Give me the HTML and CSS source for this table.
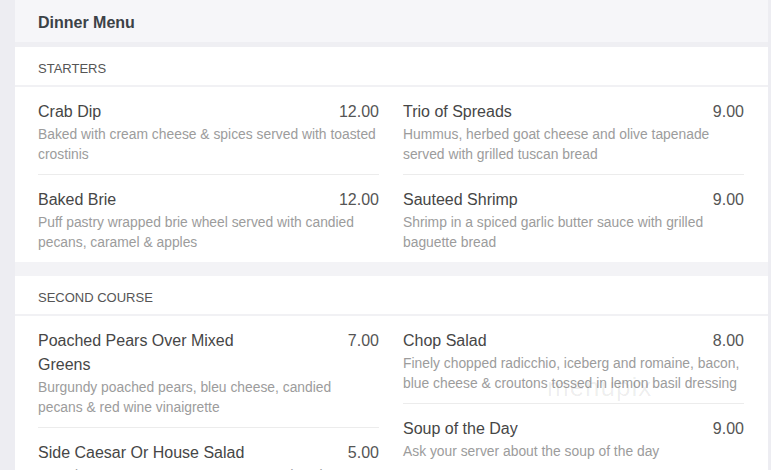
FILE: index.html
```html
<!DOCTYPE html>
<html>
<head>
<meta charset="utf-8">
<link rel="stylesheet" href="styles.css">
</head>
<body>
<div class="menu">
  <div class="menu-head">Dinner Menu</div>

  <section class="section">
    <div class="section-title">STARTERS</div>
    <div class="cols">
      <div class="col">
        <div class="item">
          <div class="row"><span class="name">Crab Dip</span><span class="price">12.00</span></div>
          <div class="desc">Baked with cream cheese &amp; spices served with toasted crostinis</div>
        </div>
        <div class="item">
          <div class="row"><span class="name">Baked Brie</span><span class="price">12.00</span></div>
          <div class="desc">Puff pastry wrapped brie wheel served with candied pecans, caramel &amp; apples</div>
        </div>
      </div>
      <div class="col">
        <div class="item">
          <div class="row"><span class="name">Trio of Spreads</span><span class="price">9.00</span></div>
          <div class="desc">Hummus, herbed goat cheese and olive tapenade served with grilled tuscan bread</div>
        </div>
        <div class="item">
          <div class="row"><span class="name">Sauteed Shrimp</span><span class="price">9.00</span></div>
          <div class="desc">Shrimp in a spiced garlic butter sauce with grilled baguette bread</div>
        </div>
      </div>
    </div>
  </section>

  <section class="section">
    <div class="section-title">SECOND COURSE</div>
    <div class="cols">
      <div class="col">
        <div class="item">
          <div class="row"><span class="name">Poached Pears Over Mixed Greens</span><span class="price">7.00</span></div>
          <div class="desc">Burgundy poached pears, bleu cheese, candied pecans &amp; red wine vinaigrette</div>
        </div>
        <div class="item">
          <div class="row"><span class="name">Side Caesar Or House Salad</span><span class="price">5.00</span></div>
          <div class="desc">Romaine, parmesan, croutons &amp; caesar dressing</div>
        </div>
      </div>
      <div class="col">
        <div class="item">
          <div class="row"><span class="name">Chop Salad</span><span class="price">8.00</span></div>
          <div class="desc">Finely chopped radicchio, iceberg and romaine, bacon, blue cheese &amp; croutons tossed in lemon basil dressing</div>
        </div>
        <div class="item">
          <div class="row"><span class="name">Soup of the Day</span><span class="price">9.00</span></div>
          <div class="desc">Ask your server about the soup of the day</div>
        </div>
      </div>
    </div>
  </section>

  <div class="watermark">menupix</div>
</div>
</body>
</html>
```

FILE: styles.css
```css
html, body {
  margin: 0;
  padding: 0;
  background: #ededf2;
  font-family: "Liberation Sans", Arial, sans-serif;
  height: 470px;
  overflow: hidden;
}

.menu {
  position: relative;
  margin: 0 3px 0 15px;
  background: #f3f3f6;
  min-height: 470px;
}

.menu-head {
  height: 42px;
  line-height: 46px;
  padding: 0 23px;
  background: #f6f6f9;
  border-bottom: 5px solid #efeff3;
  font-weight: bold;
  font-size: 16px;
  color: #3c4247;
}

.section {
  background: #fff;
  margin-bottom: 14px;
}

.section-title {
  height: 38px;
  line-height: 44px;
  padding: 0 23px;
  font-size: 13px;
  color: #555;
  border-bottom: 2px solid #f1f1f4;
}

.cols {
  display: grid;
  grid-template-columns: 1fr 1fr;
  column-gap: 24px;
  padding: 0 24px 0 23px;
}

.item {
  padding: 13px 0 10px;
  border-bottom: 1px solid #ececec;
}

.item:last-child {
  border-bottom: none;
}

.row {
  display: flex;
  justify-content: space-between;
  align-items: flex-start;
}

.name {
  max-width: 70%;
  font-size: 16px;
  line-height: 24px;
  color: #464646;
}

.price {
  font-size: 16px;
  line-height: 24px;
  color: #555;
}

.desc {
  font-size: 13.85px;
  line-height: 20px;
  color: #9c9c9c;
}

.watermark {
  position: absolute;
  left: 532px;
  top: 372px;
  font-size: 26px;
  color: rgba(0, 0, 0, 0.07);
  letter-spacing: 1px;
}
```
